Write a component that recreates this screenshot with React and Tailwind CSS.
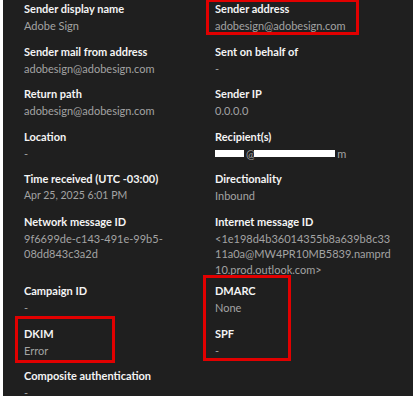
import React from 'react';

const Field = ({ label, children, small, className = '' }) => (
    <div className={className}>
        <div className="text-[11px] leading-[19px] font-bold text-[#f4f4f4]">{label}</div>
        <div className={`${small ? 'text-[10.5px]' : 'text-[11px]'} leading-[15.5px] text-[#a3a3a3]`}>{children}</div>
    </div>
);

const Redacted = () => (
    <span className="flex items-center">
        <span className="inline-block w-[29px] h-[7px] bg-white" />
        <span className="ml-[2px]">@</span>
        <span className="inline-block w-[81px] h-[7px] bg-white -ml-[1px]" />
        <span className="ml-[2px]">m</span>
    </span>
);

function App() {
    return (
        <div className="w-[416px] h-[397px] bg-white overflow-hidden" style={{ fontFamily: 'Lato, "Open Sans", sans-serif' }}>
            <div className="relative ml-[3px] mr-[3px] h-full bg-[#1f1f1f]">
                <div className="grid grid-cols-[191px_1fr] gap-y-[8px] pl-[21px] pt-0 -mt-[1px]">
                    <Field label="Sender display name">Adobe Sign</Field>
                    <Field label="Sender address">adobesign@adobesign.com</Field>

                    <Field label="Sender mail from address">adobesign@adobesign.com</Field>
                    <Field label="Sent on behalf of">-</Field>

                    <Field label="Return path">adobesign@adobesign.com</Field>
                    <Field label="Sender IP">0.0.0.0</Field>

                    <Field label="Location">-</Field>
                    <Field label="Recipient(s)"><Redacted /></Field>

                    <Field label="Time received (UTC -03:00)" small>Apr 25, 2025 6:01 PM</Field>
                    <Field label="Directionality">Inbound</Field>

                    <Field label="Network message ID" className="-mb-[4px]">
                        <span className="block">9f6699de-c143-491e-99b5-</span>
                        <span className="block">08dd843c3a2d</span>
                    </Field>
                    <Field label="Internet message ID" className="-mb-[4px]">
                        <span className="block">&lt;1e198d4b36014355b8a639b8c33</span>
                        <span className="block">11a0a@MW4PR10MB5839.namprd</span>
                        <span className="block">10.prod.outlook.com&gt;</span>
                    </Field>

                    <Field label="Campaign ID">-</Field>
                    <Field label="DMARC">None</Field>

                    <Field label="DKIM">Error</Field>
                    <Field label="SPF">-</Field>

                    <Field label="Composite authentication">-</Field>
                    <div />
                </div>

                {/* highlight boxes */}
                <div className="absolute left-[203px] top-0 w-[153px] h-[36px] border-[3px] border-[#e10000]" />
                <div className="absolute left-[200px] top-[276px] w-[88px] h-[86px] border-[3px] border-[#e10000]" />
                <div className="absolute left-[12px] top-[317px] w-[100px] h-[47px] border-[3px] border-[#e10000]" />
            </div>
        </div>
    );
}

export default App;
